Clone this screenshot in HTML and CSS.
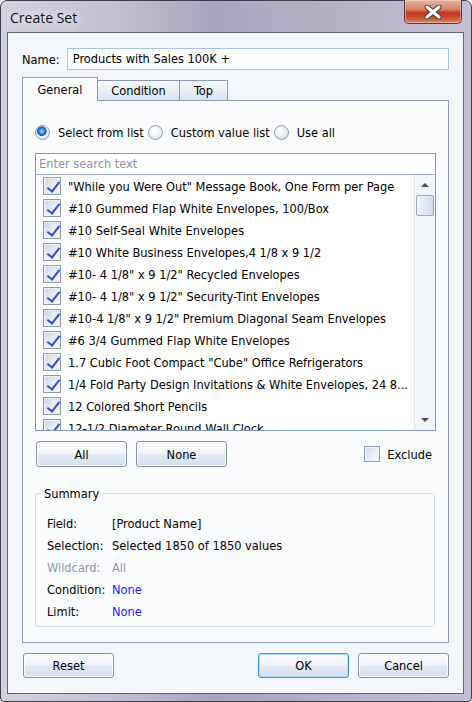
FILE: index.html
```html
<!DOCTYPE html>
<html lang="en">
<head>
  <meta charset="UTF-8">
  <title>Create Set</title>
  <link rel="stylesheet" href="styles.css">
</head>
<body>
  <div class="window">
    <div class="titlebar">
      <span class="title-text">Create Set</span>
      <span class="close-btn">
        <svg viewBox="0 0 20 14" width="20" height="14">
          <path d="M4 2 L16 12 M16 2 L4 12" stroke="#3d3a4a" stroke-width="5" stroke-linecap="round"/>
          <path d="M4 2 L16 12 M16 2 L4 12" stroke="#fff" stroke-width="3" stroke-linecap="round"/>
        </svg>
      </span>
    </div>

    <div class="client">
      <div class="name-row">
        <label class="name-label">Name:</label>
        <div class="name-input">Products with Sales 100K +</div>
      </div>

      <div class="tabs">
        <span class="tab active">General</span>
        <span class="tab tab-condition">Condition</span>
        <span class="tab tab-top">Top</span>
      </div>

      <div class="panel">
        <div class="radios">
          <span class="radio on"></span><span class="radio-label">Select from list</span>
          <span class="radio"></span><span class="radio-label">Custom value list</span>
          <span class="radio"></span><span class="radio-label">Use all</span>
        </div>

        <div class="listbox">
          <div class="search">Enter search text</div>
          <div class="list-body">
            <div class="rows">
              <div class="row"><span class="chk on"></span>"While you Were Out" Message Book, One Form per Page</div>
              <div class="row"><span class="chk on"></span>#10 Gummed Flap White Envelopes, 100/Box</div>
              <div class="row"><span class="chk on"></span>#10 Self-Seal White Envelopes</div>
              <div class="row"><span class="chk on"></span>#10 White Business Envelopes,4 1/8 x 9 1/2</div>
              <div class="row"><span class="chk on"></span>#10- 4 1/8" x 9 1/2" Recycled Envelopes</div>
              <div class="row"><span class="chk on"></span>#10- 4 1/8" x 9 1/2" Security-Tint Envelopes</div>
              <div class="row"><span class="chk on"></span>#10-4 1/8" x 9 1/2" Premium Diagonal Seam Envelopes</div>
              <div class="row"><span class="chk on"></span>#6 3/4 Gummed Flap White Envelopes</div>
              <div class="row"><span class="chk on"></span>1.7 Cubic Foot Compact "Cube" Office Refrigerators</div>
              <div class="row"><span class="chk on"></span>1/4 Fold Party Design Invitations &amp; White Envelopes, 24 8...</div>
              <div class="row"><span class="chk on"></span>12 Colored Short Pencils</div>
              <div class="row"><span class="chk on"></span>12-1/2 Diameter Round Wall Clock</div>
            </div>
            <div class="scrollbar">
              <span class="arrow-up"></span>
              <span class="thumb"></span>
              <span class="arrow-down"></span>
            </div>
          </div>
        </div>

        <div class="list-actions">
          <span class="btn btn-all">All</span>
          <span class="btn btn-none">None</span>
          <span class="exclude"><span class="chk small"></span>Exclude</span>
        </div>

        <fieldset class="summary">
          <legend>Summary</legend>
          <div class="sum-row"><span class="sum-key">Field:</span><span>[Product Name]</span></div>
          <div class="sum-row"><span class="sum-key">Selection:</span><span>Selected 1850 of 1850 values</span></div>
          <div class="sum-row muted"><span class="sum-key">Wildcard:</span><span>All</span></div>
          <div class="sum-row"><span class="sum-key">Condition:</span><span class="link">None</span></div>
          <div class="sum-row"><span class="sum-key">Limit:</span><span class="link">None</span></div>
        </fieldset>
      </div>

      <div class="footer">
        <span class="btn">Reset</span>
        <span class="spacer"></span>
        <span class="btn default">OK</span>
        <span class="btn">Cancel</span>
      </div>
    </div>
  </div>
</body>
</html>
```

FILE: styles.css
```css
:root {
  --texto: #000;
  --borda-painel: #8c99b8;
  --borda-botao: #858fa6;
  --fundo-cliente: #f3f6fb;
  --fundo-painel: #fbfcfe;
}
* { box-sizing: border-box; margin: 0; padding: 0; }
body {
  width: 472px;
  height: 702px;
  overflow: hidden;
  background: #fff;
  font-family: "DejaVu Sans Condensed", "DejaVu Sans", sans-serif;
  font-stretch: condensed;
  font-size: 12.7px;
  color: var(--texto);
}
.window {
  width: 472px;
  height: 702px;
  border: 1px solid #3e3d4c;
  border-radius: 7px 7px 4px 4px;
  background: linear-gradient(90deg, #d3d1df 0%, #c2bfd2 25%, #a9a4be 45%, #b3aec6 65%, #c4c0d4 100%);
  display: flex;
  flex-direction: column;
  padding: 0 7px 7px 6px;
}
.titlebar {
  height: 31px;
  display: flex;
  align-items: flex-start;
}
.title-text {
  font-family: "Open Sans", "Noto Sans", sans-serif;
  font-stretch: normal;
  font-size: 14px;
  margin: 7px 0 0 3px;
  color: #111;
  text-shadow: 0 0 6px #eeeef5, 0 0 10px #eeeef5;
}
.close-btn {
  margin-left: auto;
  margin-right: 2px;
  margin-top: -1px;
  width: 58px;
  height: 24px;
  border: 1px solid #5b3535;
  border-top: none;
  border-radius: 0 0 5px 5px;
  background: linear-gradient(#e8b1a3 0%, #d8836c 40%, #c0391f 55%, #c44a2a 75%, #e08a66 100%);
  box-shadow: inset 0 0 0 1px rgba(255, 220, 210, 0.5);
  display: flex;
  align-items: center;
  justify-content: center;
}
.client {
  flex: 1;
  border: 1px solid #5f6478;
  background: var(--fundo-cliente);
  display: flex;
  flex-direction: column;
  padding: 0 14px 0 14px;
}
.name-row {
  display: flex;
  align-items: center;
  margin-top: 15px;
  height: 22px;
}
.name-label { width: 45px; }
.name-input {
  width: 384px;
  height: 22px;
  border: 1px solid #a9c1e2;
  background: #fff;
  padding: 2px 5px;
  white-space: nowrap;
}
.tabs {
  display: flex;
  align-items: flex-end;
  margin-top: 7px;
  height: 23px;
  position: relative;
  z-index: 1;
}
.tab {
  height: 20px;
  border: 1px solid var(--borda-painel);
  border-bottom: none;
  background: linear-gradient(#f6f8fc, #dbe3f1);
  display: flex;
  align-items: center;
  justify-content: center;
  margin-left: -1px;
}
.tab.active {
  margin-left: 0;
  width: 76px;
  height: 24px;
  margin-bottom: -1px;
  background: var(--fundo-painel);
  padding-bottom: 1px;
}
.tab-condition { width: 83px; }
.tab-top { width: 49px; }
.panel {
  width: 427px;
  height: 543px;
  border: 1px solid var(--borda-painel);
  background: var(--fundo-painel);
  padding: 23px 12px 0 12px;
}
.radios {
  display: flex;
  align-items: center;
  height: 16px;
}
.radio {
  width: 15px;
  height: 15px;
  border-radius: 50%;
  border: 1px solid #8b98b2;
  background: radial-gradient(circle at 40% 35%, #ffffff 0%, #e9edf4 60%, #cbd3e0 100%);
  margin-right: 8px;
  flex: none;
}
.radio.on {
  background: radial-gradient(circle at 45% 40%, #b9e2ff 0%, #3a8fe6 22%, #1456b8 42%, #eef2f8 48%, #d7dde8 100%);
}
.radio-label { margin-right: 4px; }
.listbox {
  margin-top: 13px;
  width: 401px;
  height: 278px;
  border: 1px solid #8495b8;
  background: #fff;
  display: flex;
  flex-direction: column;
}
.search {
  height: 21px;
  border-bottom: 1px solid #a3b0cb;
  color: #8b93a4;
  padding: 2px 3px;
  flex: none;
}
.list-body {
  flex: 1;
  display: flex;
  overflow: hidden;
}
.rows {
  flex: 1;
  overflow: hidden;
  padding-left: 7px;
}
.row {
  height: 22px;
  display: flex;
  align-items: center;
  white-space: nowrap;
}
.chk {
  width: 18px;
  height: 18px;
  border: 1px solid #8d9bb7;
  background: linear-gradient(135deg, #cdd7e8 0%, #e9eef6 55%, #f8fafd 100%);
  box-shadow: inset 0 0 0 1px #eef2f8;
  margin-right: 7px;
  flex: none;
  position: relative;
}
.chk.on::after {
  content: "";
  position: absolute;
  left: 6px;
  top: 1px;
  width: 5px;
  height: 11px;
  border: solid #2d4ccf;
  border-width: 0 2px 2px 0;
  transform: rotate(38deg);
}
.chk.small {
  width: 16px;
  height: 16px;
}
.scrollbar {
  width: 21px;
  flex: none;
  background: #f1f4f9;
  border-left: 1px solid #e2e7ef;
  display: flex;
  flex-direction: column;
  align-items: center;
  padding-top: 8px;
}
.arrow-up, .arrow-down {
  width: 0;
  height: 0;
  border-left: 4px solid transparent;
  border-right: 4px solid transparent;
}
.arrow-up { border-bottom: 4px solid #4d4d55; }
.arrow-down { border-top: 4px solid #4d4d55; margin-top: auto; margin-bottom: 8px; }
.thumb {
  margin-top: 8px;
  width: 18px;
  height: 21px;
  border: 1px solid #98a7c2;
  border-radius: 2px;
  background: linear-gradient(90deg, #f3f6fb, #d3ddee);
}
.list-actions {
  display: flex;
  align-items: center;
  margin-top: 10px;
  height: 26px;
}
.btn {
  width: 91px;
  height: 26px;
  border: 1px solid var(--borda-botao);
  border-radius: 3px;
  background: linear-gradient(#fbfcfe 0%, #f1f4fa 45%, #e2e9f4 55%, #d6dfee 100%);
  box-shadow: inset 0 0 0 1px rgba(255, 255, 255, 0.8);
  display: flex;
  align-items: center;
  justify-content: center;
  flex: none;
}
.btn-all { margin-left: 1px; }
.btn-none { margin-left: 9px; }
.exclude {
  margin-left: auto;
  margin-right: 4px;
  display: flex;
  align-items: center;
}
.summary {
  margin-top: 19px;
  width: 400px;
  height: 141px;
  border: 1px solid #d3dfe8;
  border-radius: 3px;
  padding: 11px 0 0 11px;
}
.summary legend {
  margin-left: -6px;
  padding: 0 3px;
}
.sum-row {
  height: 22px;
  display: flex;
  align-items: center;
}
.sum-key { width: 65px; }
.muted { color: #8d99ab; }
.link { color: #1a1aff; }
.footer {
  display: flex;
  align-items: center;
  margin-top: 10px;
}
.footer .btn { height: 25px; }
.footer .btn:first-child { margin-left: 1px; }
.spacer { flex: 1; }
.footer .btn.default {
  border-color: #3c95d6;
  box-shadow: inset 0 0 0 1px #a9dcf7;
  margin-right: 9px;
}
```
